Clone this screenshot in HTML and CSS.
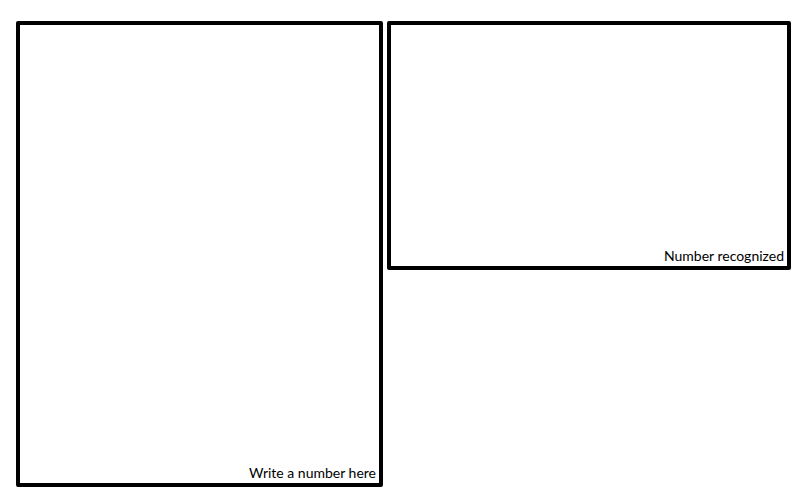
FILE: index.html
```html
<!DOCTYPE html>
<html lang="en">
<head>
  <meta charset="UTF-8" />
  <title>Number recognition</title>
  <link rel="stylesheet" href="styles.css">
</head>
<body>
  <div class="board">
    <div class="pad pad-draw">
      <span class="caption">Write a number here</span>
    </div>
    <div class="pad pad-result">
      <span class="caption">Number recognized</span>
    </div>
  </div>
</body>
</html>
```

FILE: styles.css
```css
body {
  margin: 0;
  background: #fff;
  font-family: 'Lato', 'Liberation Sans', sans-serif;
  color: #000;
}
.board {
  display: flex;
  align-items: flex-start;
  gap: 4px;
  padding: 21px 0 0 16px;
}
.pad {
  box-sizing: border-box;
  border: 4px solid #000;
  border-radius: 2px;
  display: flex;
  align-items: flex-end;
  justify-content: flex-end;
  padding: 0 3px 3px 0;
}
.pad-draw {
  width: 367px;
  height: 466px;
}
.pad-result {
  width: 404px;
  height: 249px;
}
.caption {
  font-size: 14px;
  line-height: 14px;
}
```
